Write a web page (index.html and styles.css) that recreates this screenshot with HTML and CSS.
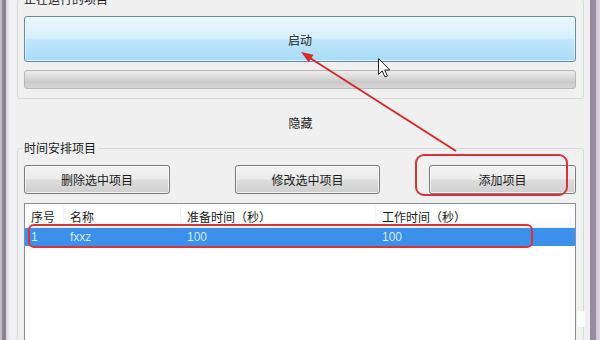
FILE: index.html
```
<!DOCTYPE html>
<html lang="zh-CN">
<head>
<meta charset="utf-8">
<title>项目计时</title>
<link rel="stylesheet" href="styles.css">
</head>
<body>
<div class="win">
  <div class="frame-l"></div>
  <div class="main">
    <fieldset class="group g1">
      <legend>正在运行的项目</legend>
      <button class="btn-start">启动</button>
      <div class="progress"></div>
    </fieldset>
    <div class="hide-row">隐藏</div>
    <fieldset class="group g2">
      <legend>时间安排项目</legend>
      <div class="btn-row">
        <button class="btn b1">删除选中项目</button>
        <button class="btn b2">修改选中项目</button>
        <button class="btn b3">添加项目</button>
      </div>
      <div class="list">
        <div class="cols list-head">
          <div class="hc">序号</div>
          <div class="hc">名称</div>
          <div class="hc">准备时间（秒）</div>
          <div class="hc">工作时间（秒）</div>
        </div>
        <div class="cols list-row sel">
          <div class="rc">1</div>
          <div class="rc">fxxz</div>
          <div class="rc">100</div>
          <div class="rc">100</div>
        </div>
      </div>
    </fieldset>
  </div>
  <div class="frame-r"></div>
  <svg class="annot" width="600" height="340" viewBox="0 0 600 340">
    <rect x="416" y="155" width="151" height="40" rx="8" ry="8" fill="none" stroke="#d8323a" stroke-width="2"/>
    <rect x="29" y="225" width="503" height="22" rx="5" ry="5" fill="none" stroke="#d8323a" stroke-width="2"/>
    <line x1="456" y1="151" x2="310" y2="58" stroke="#d42a2a" stroke-width="2"/>
    <polygon points="301,52 313.5,54.7 308.7,62.3" fill="#d42a2a"/>
    <path d="M378.5 58.5 L378.5 74.5 L382.2 70.9 L385 77 L387.4 76 L384.7 70 L389.8 70 Z" fill="#fff" stroke="#222" stroke-width="1" stroke-linejoin="round"/>
    <rect x="577" y="311" width="8" height="16" fill="#ffffff" opacity="0.85"/>
  </svg>
</div>
</body>
</html>
```
FILE: styles.css
```
html, body {
  margin: 0;
  padding: 0;
}
body {
  background: #f0f0f0;
  font-family: "Noto Sans CJK SC", "Noto Sans", sans-serif;
  font-size: 12px;
  color: #1a1a1a;
}
.win {
  position: relative;
  display: flex;
  width: 600px;
  height: 340px;
  overflow: hidden;
  background: #f0f0f0;
}
.frame-l {
  width: 9px;
  flex: none;
  background: linear-gradient(90deg, #c2bec6 0, #c2bec6 2px, #8a8194 2px, #8a8194 6px, #d9d6dc 6px, #e9e8ea 9px);
}
.frame-r {
  width: 10px;
  flex: none;
  background: linear-gradient(90deg, #958a9f 0, #958a9f 6px, #cdc9d1 6px, #d8d5db 10px);
}
.main {
  flex: 1;
  padding: 0 6px 0 8px;
  display: flex;
  flex-direction: column;
}
.group {
  margin: 0;
  border: 1px solid #d6dadd;
  border-radius: 3px;
  padding: 10px 7px 9px 6px;
  min-width: 0;
  flex: none;
}
.group legend {
  padding: 0 2px;
  margin-left: -2px;
  line-height: 14px;
  height: 14px;
  font-size: 12px;
}
.g1 {
  margin-top: -8px;
}
.btn-start {
  display: block;
  width: 100%;
  height: 46px;
  margin: 0;
  padding: 0;
  font: inherit;
  color: #1a1a1a;
  border: 1px solid #5f8aaf;
  border-radius: 3px;
  background: linear-gradient(#eaf6fd 0%, #d9f0fc 48%, #bee6fd 52%, #a9dbf6 100%);
  box-shadow: inset 0 0 0 1px rgba(255,255,255,0.6);
}
.progress {
  margin-top: 8px;
  height: 19px;
  box-sizing: border-box;
  border: 1px solid #b8b8b8;
  border-radius: 3px;
  background: linear-gradient(#ececec 0%, #dcdcdc 35%, #cbcbcb 65%, #d6d6d6 100%);
}
.hide-row {
  height: 42px;
  box-sizing: border-box;
  padding-top: 4px;
  display: flex;
  align-items: center;
  justify-content: center;
  flex: none;
}
.g2 {
  height: 260px;
  box-sizing: border-box;
}
.btn-row {
  display: flex;
}
.btn {
  height: 29px;
  margin: 0;
  padding: 0;
  font: inherit;
  color: #1a1a1a;
  border: 1px solid #7a7a7a;
  border-radius: 3px;
  background: linear-gradient(#f3f3f3 0%, #ebebeb 48%, #dddddd 52%, #cfcfcf 100%);
  box-shadow: inset 0 0 0 1px rgba(255,255,255,0.7);
  flex: none;
}
.b1 { width: 146px; margin-right: 65px; }
.b2 { width: 145px; margin-right: 49px; }
.b3 { width: 147px; }
.list {
  margin-top: 9px;
  height: 160px;
  border: 1px solid #8a8f97;
  background: #ffffff;
}
.cols {
  display: grid;
  grid-template-columns: 39px 117px 195px 195px;
}
.list-head {
  height: 24px;
  box-sizing: border-box;
  border-bottom: 1px solid #eef0f2;
  background: linear-gradient(#ffffff 0%, #ffffff 60%, #f6f7f8 100%);
}
.hc {
  padding: 2px 0 0 6px;
  display: flex;
  align-items: center;
  border-right: 1px solid #f3f4f5;
  white-space: nowrap;
}
.list-row {
  height: 18px;
}
.rc {
  padding-left: 6px;
  display: flex;
  align-items: center;
  font-family: "Liberation Sans", "Noto Sans CJK SC", sans-serif;
  font-size: 12px;
}
.sel {
  background: #3a90ea;
  color: #d6eaff;
}
.annot {
  position: absolute;
  top: 0;
  left: 0;
  pointer-events: none;
}
```
